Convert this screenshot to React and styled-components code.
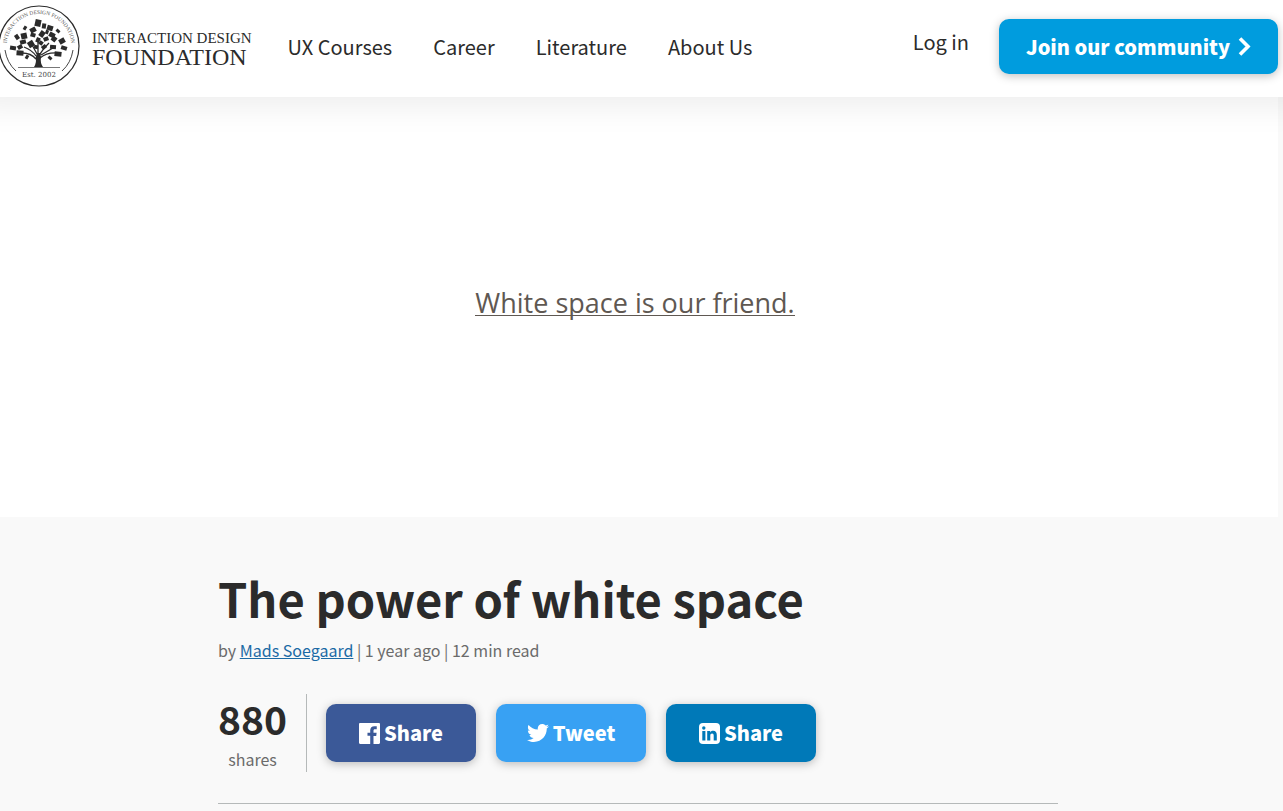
import React from 'react'
import styled, { createGlobalStyle } from 'styled-components'
import { FaTwitter } from 'react-icons/fa'

const GlobalStyle = createGlobalStyle`
    * {
        box-sizing: border-box;
    }

    body {
        margin: 0;
        background: #f9f9f9;
        color: #2b2b2b;
        font-family: "Noto Sans CJK SC", "Noto Sans", sans-serif;
        overflow-x: hidden;
    }
`

const Header = styled.header`
    position: relative;
    display: flex;
    align-items: center;
    height: 97px;
    padding-right: 5px;
    background: #fff;
    box-shadow: 0 -15px 30px 25px rgba(0, 0, 0, 0.07);
`

const Logo = styled.a`
    display: flex;
    align-items: center;
    gap: 12px;
    height: 92px;
    margin-left: -2px;
    align-self: flex-start;
    color: #2b2b2b;
    text-decoration: none;
    font-family: "Liberation Serif", serif;
`

const LogoText = styled.span`
    display: flex;
    flex-direction: column;
    padding-top: 6px;
    white-space: nowrap;
`

const LogoLine = styled.span`
    font-size: ${props => props.$size}px;
    line-height: ${props => props.$height}px;
`

const Nav = styled.nav`
    display: flex;
    flex: 1;
    gap: 41px;
    margin-left: 36px;
    padding-bottom: 4px;
`

const NavLink = styled.a`
    color: #2b2b2b;
    font-size: 20px;
    line-height: 32px;
    text-decoration: none;
    white-space: nowrap;
`

const Account = styled.div`
    display: flex;
    align-items: flex-start;
    gap: 30px;
    padding-bottom: 4px;
`

const LoginLink = styled(NavLink)`
    margin-top: 7px;
`

const Button = styled.button`
    display: flex;
    align-items: center;
    justify-content: center;
    gap: ${props => props.$gap || 4}px;
    width: ${props => props.$width}px;
    height: ${props => props.$height}px;
    padding: 0;
    border: 0;
    border-radius: 10px;
    background: ${props => props.$color};
    box-shadow: 0 2px 10px rgba(0, 0, 0, 0.25);
    color: #fff;
    cursor: pointer;
    font-family: inherit;
    font-size: 20px;
    font-weight: 900;
    line-height: 32px;
    white-space: nowrap;
`

const Hero = styled.section`
    display: flex;
    align-items: center;
    justify-content: center;
    height: 420px;
    margin-right: 5px;
    padding: 0 8px 8px 0;
    background: #fff;
`

const Quote = styled.p`
    margin: 0;
    border-bottom: 1px solid #5f5852;
    color: #5f5852;
    font-family: "Open Sans", sans-serif;
    font-size: 27px;
    line-height: 24px;
`

const Article = styled.main`
    padding: 51px 7px 0 0;
`

const Content = styled.div`
    max-width: 840px;
    margin: 0 auto;
`

const Title = styled.h1`
    margin: 0;
    font-size: 47px;
    line-height: 60px;
`

const Byline = styled.p`
    margin: 9px 0 0;
    color: #6b6b6b;
    font-size: 16px;
    line-height: 26px;

    a {
        color: #1b6aa5;
    }
`

const ShareBar = styled.div`
    display: flex;
    align-items: center;
    gap: 19px;
    margin-top: 31px;
    padding-bottom: 31px;
    border-bottom: 1px solid #b5b9b9;
`

const Counter = styled.div`
    height: 78px;
    padding-right: 19px;
    border-right: 1px solid #b5b9b9;
    text-align: center;
`

const Count = styled.div`
    font-size: 39px;
    font-weight: bold;
    line-height: 48px;
`

const CountLabel = styled.div`
    padding-top: 4px;
    color: #6b6b6b;
    font-size: 16px;
    line-height: 26px;
`

const Networks = styled.div`
    display: flex;
    gap: 20px;
`

// x, y, width, height, rotation
const leaves = [
    [38, 23, 6, 7, 12], [44, 26, 4, 5, 8], [50, 28, 6, 5, 18], [25, 28, 3, 4, 30],
    [33, 30, 6, 5, -28], [24, 36, 6, 6, -12], [17, 37, 4, 5, -35], [33, 35, 5, 4, 15],
    [42, 34, 5, 6, 35], [47, 32, 3, 4, 20], [58, 31, 4, 3, 40], [52, 35, 6, 5, 28],
    [31, 44, 6, 6, -32], [23, 42, 6, 4, -15], [38, 40, 4, 5, 22], [46, 39, 5, 4, -20],
    [54, 39, 5, 5, 38], [62, 41, 6, 5, -30], [13, 48, 6, 4, 8], [20, 47, 5, 4, -30],
    [44, 47, 5, 4, -38], [53, 47, 6, 4, 5], [64, 48, 6, 4, 18], [20, 53, 7, 5, 4],
    [58, 54, 7, 5, 6], [27, 57, 3, 4, 30], [50, 58, 4, 3, 40], [41, 43, 4, 4, 35],
    [36, 47, 4, 4, 10]
]

const Emblem = () => (
    <svg width="82" height="82" viewBox="-2 5 82 82" aria-hidden="true">
        <circle cx="39" cy="46" r="40" fill="#fff" stroke="#2b2b2b" strokeWidth="1.2" />
        <path id="ring" d="M6.600 49A32.500 32.500 0 1 1 71.400 49" fill="none" />
        <text fontSize="5.500" fill="#555" fontFamily="Liberation Serif, serif">
            <textPath href="#ring" startOffset="50%" textAnchor="middle">
                INTERACTION DESIGN FOUNDATION
            </textPath>
        </text>
        <path d="M5 50Q7 63 16 71M73 50Q71 63 62 71" fill="none" stroke="#444" />
        <g fill="#2b2b2b">
            {leaves.map(([x, y, w, h, turn]) => (
                <rect
                    key={`${x}-${y}`}
                    x={x - w / 2}
                    y={y - h / 2}
                    width={w}
                    height={h}
                    transform={`rotate(${turn} ${x} ${y})`}
                />
            ))}
            <path d="M34 67Q37 62 35.500 58L37 53H40L41 57Q40 63 43 67Z" />
        </g>
        <path
            d="M36 59Q31 53 22 53M36 56Q32 50 24 47M38 56V40M39 56Q42 50 49 43M40 58Q47 52 58 53M37 54L31 43M41 55L53 48"
            fill="none"
            stroke="#2b2b2b"
            strokeWidth="1.3"
        />
        <path d="M18 67.500H60" stroke="#777" />
        <text x="39" y="77" textAnchor="middle" fontSize="7" fill="#444" fontFamily="DejaVu Serif, serif">
            Est. 2002
        </text>
    </svg>
)

const Chevron = () => (
    <svg width="13" height="19" viewBox="0 0 13 19" aria-hidden="true">
        <path d="M2 1.500L10 9.500L2 17.500" fill="none" stroke="#fff" strokeWidth="3.600" />
    </svg>
)

const FacebookIcon = () => (
    <svg width="21" height="21" viewBox="0 0 24 24" fill="currentColor" aria-hidden="true">
        <path d="M22.676 0H1.324C.593 0 0 .593 0 1.324v21.352C0 23.408.593 24 1.324 24h11.494v-9.294H9.689v-3.621h3.129V8.410c0-3.099 1.894-4.785 4.659-4.785 1.325 0 2.464.097 2.796.141v3.240h-1.921c-1.500 0-1.792.721-1.792 1.771v2.311h3.584l-.465 3.630H16.560V24h6.115c.733 0 1.325-.592 1.325-1.324V1.324C24 .593 23.408 0 22.676 0" />
    </svg>
)

const LinkedinIcon = () => (
    <svg width="21" height="21" viewBox="0 0 21 21" aria-hidden="true">
        <rect width="21" height="21" rx="4" fill="#fff" />
        <g fill="#0079b8">
            <circle cx="4.800" cy="5" r="1.700" />
            <path d="M3.300 8H6.400V17.500H3.300ZM8.200 8H11.200V9.400C12 8.200 13 7.800 14.200 7.800C16.700 7.800 17.800 9.400 17.800 12V17.500H14.700V12.600C14.700 11.200 14.200 10.400 13.100 10.400C11.900 10.400 11.300 11.200 11.300 12.600V17.500H8.200Z" />
        </g>
    </svg>
)

const links = ['UX Courses', 'Career', 'Literature', 'About Us']

const networks = [
    { name: 'facebook', label: 'Share', color: '#3b5998', icon: <FacebookIcon /> },
    { name: 'twitter', label: 'Tweet', color: '#38a1f3', icon: <FaTwitter size={22} /> },
    { name: 'linkedin', label: 'Share', color: '#0079b8', icon: <LinkedinIcon /> }
]

const App = () => {
    return (
        <>
            <GlobalStyle />
            <Header>
                <Logo href="#">
                    <Emblem />
                    <LogoText>
                        <LogoLine $size={15} $height={16}>INTERACTION DESIGN</LogoLine>
                        <LogoLine $size={24} $height={22}>FOUNDATION</LogoLine>
                    </LogoText>
                </Logo>
                <Nav>
                    {links.map(link => <NavLink href="#" key={link}>{link}</NavLink>)}
                </Nav>
                <Account>
                    <LoginLink href="#">Log in</LoginLink>
                    <Button $color="#009cde" $width={279} $height={55} $gap={8}>
                        Join our community
                        <Chevron />
                    </Button>
                </Account>
            </Header>
            <Hero>
                <Quote>White space is our friend.</Quote>
            </Hero>
            <Article>
                <Content>
                    <Title>The power of white space</Title>
                    <Byline>
                        by <a href="#">Mads Soegaard</a> | 1 year ago | 12 min read
                    </Byline>
                    <ShareBar>
                        <Counter>
                            <Count>880</Count>
                            <CountLabel>shares</CountLabel>
                        </Counter>
                        <Networks>
                            {networks.map(network => (
                                <Button key={network.name} $color={network.color} $width={150} $height={58}>
                                    {network.icon}
                                    {network.label}
                                </Button>
                            ))}
                        </Networks>
                    </ShareBar>
                </Content>
            </Article>
        </>
    )
}

export default App
